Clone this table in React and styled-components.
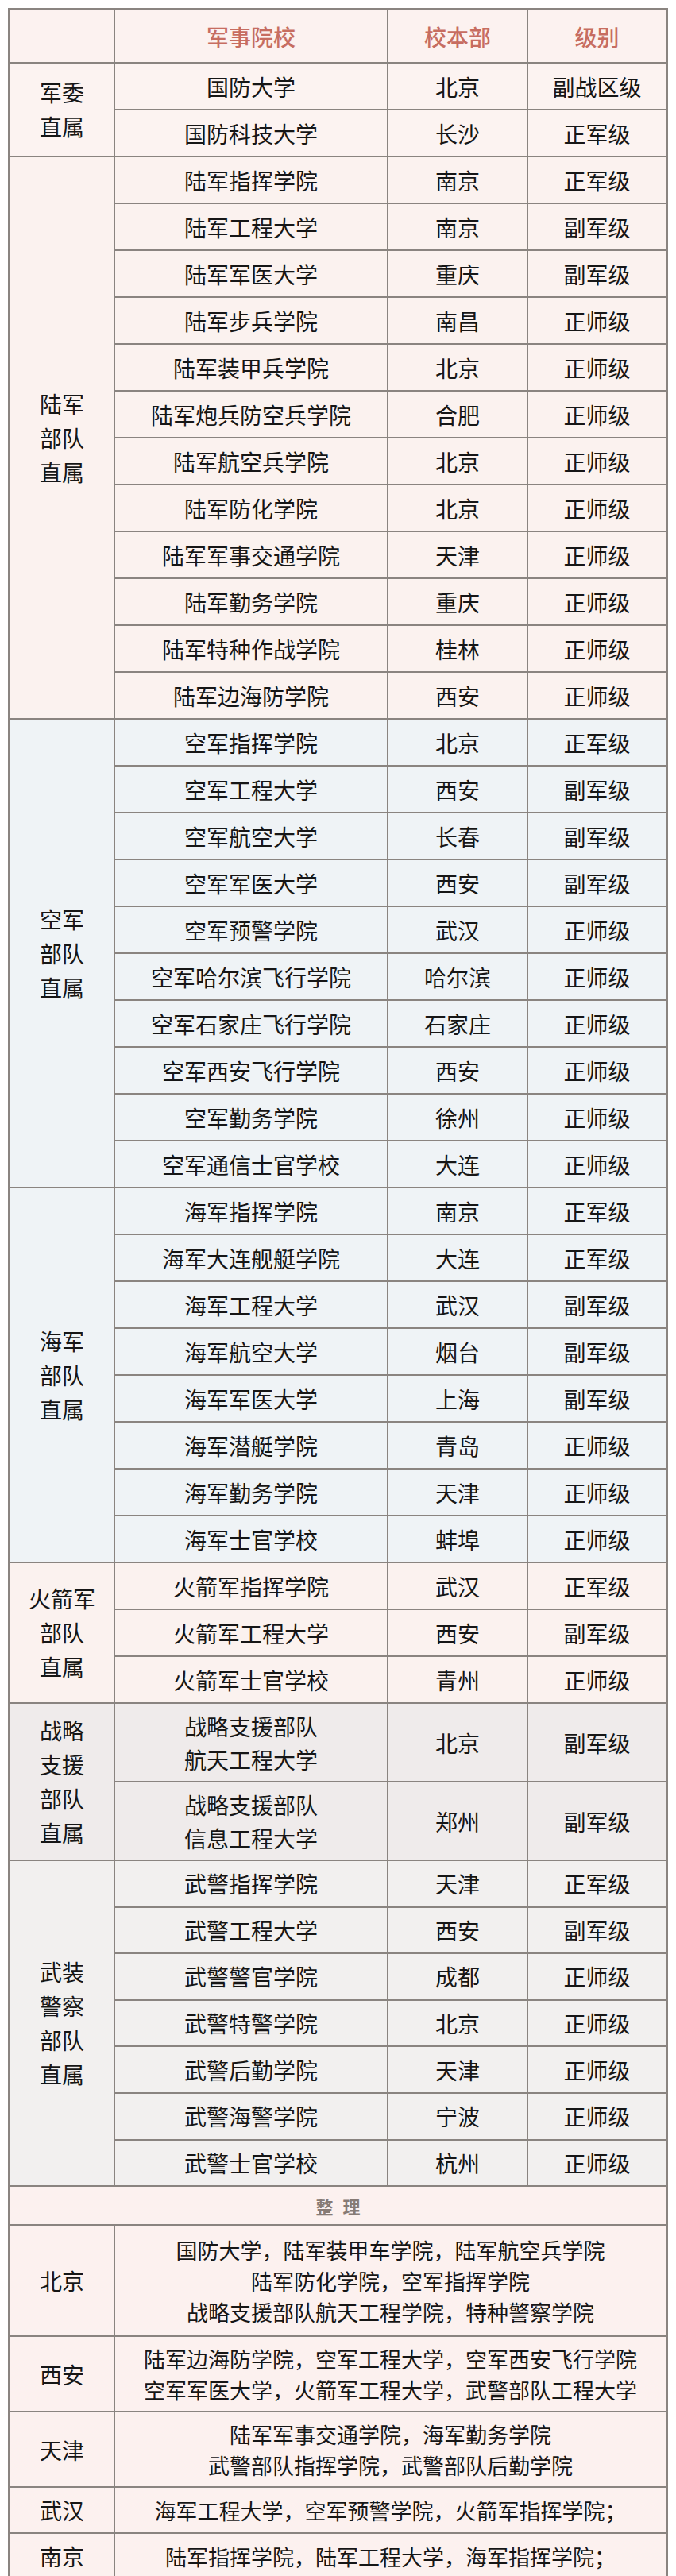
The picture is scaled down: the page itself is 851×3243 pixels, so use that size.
import React from 'react';
import styled, { createGlobalStyle } from 'styled-components';

const line = '#8a8480';

const tones = {
  head: '#fcf2f0',
  pink: '#fcf3f1',
  blush: '#fbf2ef',
  sky: '#eff3f6',
  ash: '#efebeb',
  stone: '#f2f0ef',
  note: '#fcf1ef',
};

const sections = [
  {
    label: ['军委', '直属'],
    tone: 'pink',
    rows: [
      ['国防大学', '北京', '副战区级'],
      ['国防科技大学', '长沙', '正军级'],
    ],
  },
  {
    label: ['陆军', '部队', '直属'],
    tone: 'blush',
    rows: [
      ['陆军指挥学院', '南京', '正军级'],
      ['陆军工程大学', '南京', '副军级'],
      ['陆军军医大学', '重庆', '副军级'],
      ['陆军步兵学院', '南昌', '正师级'],
      ['陆军装甲兵学院', '北京', '正师级'],
      ['陆军炮兵防空兵学院', '合肥', '正师级'],
      ['陆军航空兵学院', '北京', '正师级'],
      ['陆军防化学院', '北京', '正师级'],
      ['陆军军事交通学院', '天津', '正师级'],
      ['陆军勤务学院', '重庆', '正师级'],
      ['陆军特种作战学院', '桂林', '正师级'],
      ['陆军边海防学院', '西安', '正师级'],
    ],
  },
  {
    label: ['空军', '部队', '直属'],
    tone: 'sky',
    rows: [
      ['空军指挥学院', '北京', '正军级'],
      ['空军工程大学', '西安', '副军级'],
      ['空军航空大学', '长春', '副军级'],
      ['空军军医大学', '西安', '副军级'],
      ['空军预警学院', '武汉', '正师级'],
      ['空军哈尔滨飞行学院', '哈尔滨', '正师级'],
      ['空军石家庄飞行学院', '石家庄', '正师级'],
      ['空军西安飞行学院', '西安', '正师级'],
      ['空军勤务学院', '徐州', '正师级'],
      ['空军通信士官学校', '大连', '正师级'],
    ],
  },
  {
    label: ['海军', '部队', '直属'],
    tone: 'sky',
    rows: [
      ['海军指挥学院', '南京', '正军级'],
      ['海军大连舰艇学院', '大连', '正军级'],
      ['海军工程大学', '武汉', '副军级'],
      ['海军航空大学', '烟台', '副军级'],
      ['海军军医大学', '上海', '副军级'],
      ['海军潜艇学院', '青岛', '正师级'],
      ['海军勤务学院', '天津', '正师级'],
      ['海军士官学校', '蚌埠', '正师级'],
    ],
  },
  {
    label: ['火箭军', '部队', '直属'],
    tone: 'blush',
    rows: [
      ['火箭军指挥学院', '武汉', '正军级'],
      ['火箭军工程大学', '西安', '副军级'],
      ['火箭军士官学校', '青州', '正师级'],
    ],
  },
  {
    label: ['战略', '支援', '部队', '直属'],
    tone: 'ash',
    height: 97,
    rows: [
      [['战略支援部队', '航天工程大学'], '北京', '副军级'],
      [['战略支援部队', '信息工程大学'], '郑州', '副军级'],
    ],
  },
  {
    label: ['武装', '警察', '部队', '直属'],
    tone: 'stone',
    height: 56.6,
    rows: [
      ['武警指挥学院', '天津', '正军级'],
      ['武警工程大学', '西安', '副军级'],
      ['武警警官学院', '成都', '正师级'],
      ['武警特警学院', '北京', '正师级'],
      ['武警后勤学院', '天津', '正师级'],
      ['武警海警学院', '宁波', '正师级'],
      ['武警士官学校', '杭州', '正师级'],
    ],
  },
];

const summary = [
  {
    city: '北京',
    height: 138,
    lines: [
      '国防大学，陆军装甲车学院，陆军航空兵学院',
      '陆军防化学院，空军指挥学院',
      '战略支援部队航天工程学院，特种警察学院',
    ],
  },
  {
    city: '西安',
    height: 93,
    lines: [
      '陆军边海防学院，空军工程大学，空军西安飞行学院',
      '空军军医大学，火箭军工程大学，武警部队工程大学',
    ],
  },
  {
    city: '天津',
    height: 93,
    lines: ['陆军军事交通学院，海军勤务学院', '武警部队指挥学院，武警部队后勤学院'],
  },
  { city: '武汉', height: 56, lines: ['海军工程大学，空军预警学院，火箭军指挥学院；'] },
  { city: '南京', height: 56, lines: ['陆军指挥学院，陆军工程大学，海军指挥学院；'] },
];

const GlobalStyle = createGlobalStyle`
  body {
    margin: 0;
    background: #ffffff;
    font-family: "Noto Sans CJK SC", "Noto Sans", sans-serif;
    color: #161616;
  }
`;

const Sheet = styled.div`
  display: grid;
  grid-template-columns: 130px 342px 174px 173px;
  gap: 2px;
  width: 831px;
  box-sizing: border-box;
  margin: 10px 0 0 10px;
  border: 3px solid ${line};
  background: ${line};
`;

const Cell = styled.div`
  display: flex;
  flex-direction: column;
  align-items: center;
  justify-content: center;
  text-align: center;
  min-height: ${p => p.$h || 57}px;
  background: ${p => tones[p.$tone]};
  font-size: 28px;
  line-height: 42px;
  white-space: nowrap;
`;

const HeadCell = styled(Cell)`
  color: #c76d61;
  font-weight: 500;
`;

const GroupCell = styled(Cell)`
  grid-row: span ${p => p.$span};
  line-height: 43px;
`;

const NoteBand = styled(Cell)`
  grid-column: 1 / -1;
  font-size: 22px;
  font-weight: 700;
  color: #877b75;
  letter-spacing: 12px;
  padding-left: 12px;
`;

const ListCell = styled(Cell)`
  grid-column: span 3;
  font-size: 27px;
  line-height: 39px;
`;

const App = () => (
  <>
    <GlobalStyle />
    <Sheet>
      <HeadCell $tone="head" $h={65} />
      <HeadCell $tone="head" $h={65}>军事院校</HeadCell>
      <HeadCell $tone="head" $h={65}>校本部</HeadCell>
      <HeadCell $tone="head" $h={65}>级别</HeadCell>

      {sections.map(section => (
        <React.Fragment key={section.label.join('')}>
          <GroupCell $tone={section.tone} $span={section.rows.length} $h={1}>
            {section.label.map(part => (
              <span key={part}>{part}</span>
            ))}
          </GroupCell>
          {section.rows.map(([name, city, rank]) => (
            <React.Fragment key={[].concat(name).join('')}>
              <Cell $tone={section.tone} $h={section.height}>
                {[].concat(name).map(part => (
                  <span key={part}>{part}</span>
                ))}
              </Cell>
              <Cell $tone={section.tone} $h={section.height}>{city}</Cell>
              <Cell $tone={section.tone} $h={section.height}>{rank}</Cell>
            </React.Fragment>
          ))}
        </React.Fragment>
      ))}

      <NoteBand $tone="note" $h={47}>整理</NoteBand>

      {summary.map(item => (
        <React.Fragment key={item.city}>
          <Cell $tone="note" $h={item.height}>{item.city}</Cell>
          <ListCell $tone="note" $h={item.height}>
            {item.lines.map(text => (
              <span key={text}>{text}</span>
            ))}
          </ListCell>
        </React.Fragment>
      ))}
    </Sheet>
  </>
);

export default App;
